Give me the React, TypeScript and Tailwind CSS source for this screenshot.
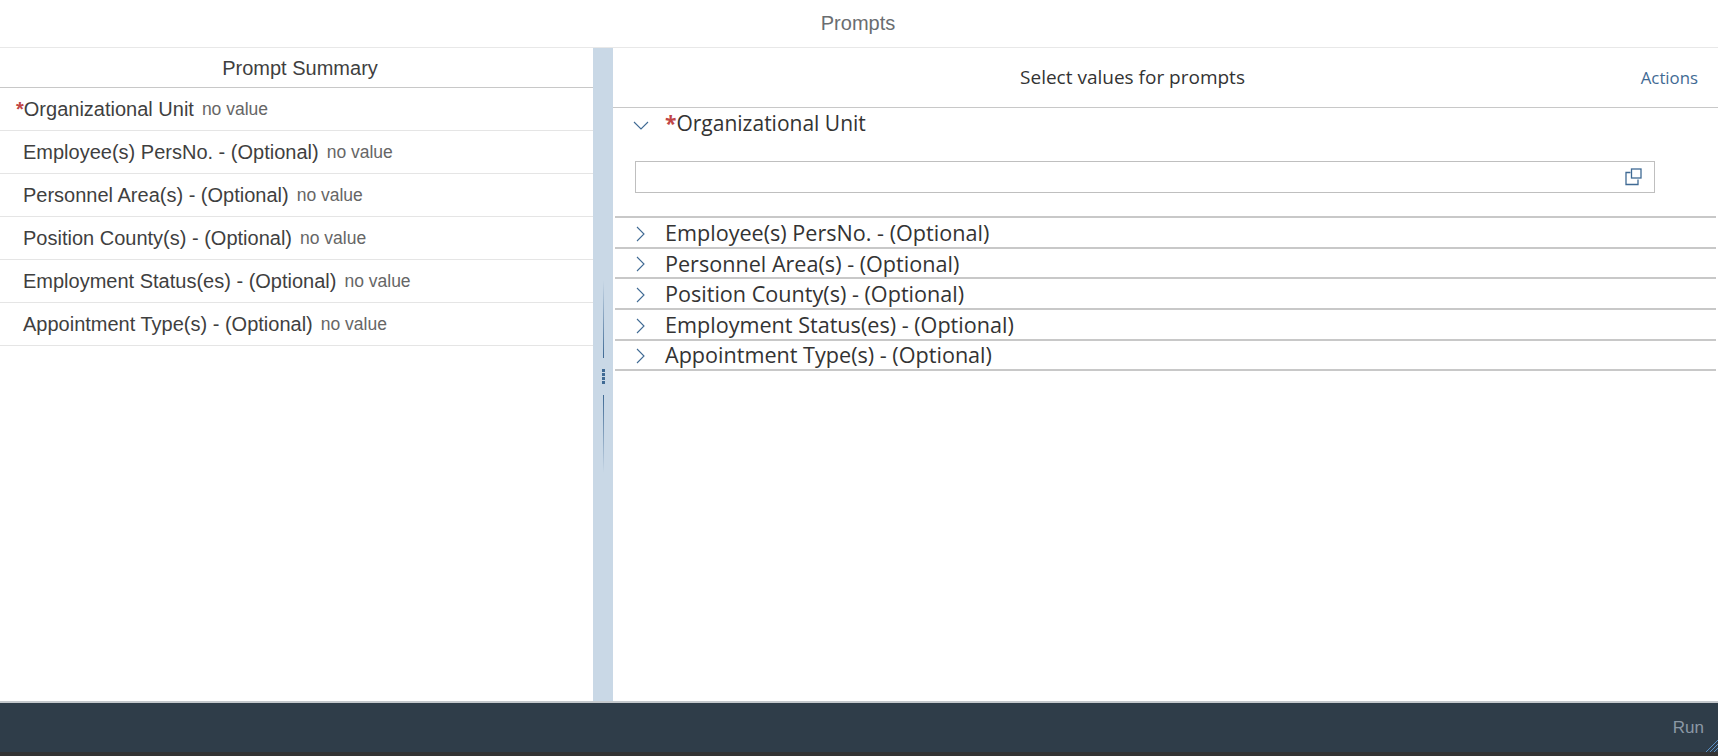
const items = [
  "Employee(s) PersNo. - (Optional)",
  "Personnel Area(s) - (Optional)",
  "Position County(s) - (Optional)",
  "Employment Status(es) - (Optional)",
  "Appointment Type(s) - (Optional)",
];
const rightHeights = ["h-[31px]", "h-[30px]", "h-[31px]", "h-[31px]", "h-[30px]"];

function Chevron({ down }: { down?: boolean }) {
  return (
    <svg width="16" height="16" viewBox="0 0 16 16" fill="none" stroke="#3f6a94" strokeWidth="1.1" className={`shrink-0 ${down ? "mt-[3px]" : "mt-[2px]"}`}>
      {down ? <path d="M1 5l7 7 7-7" /> : <path d="M4 1l7 7-7 7" />}
    </svg>
  );
}

function Row({ label, req }: { label: string; req?: boolean }) {
  return (
    <div className={`h-[43px] border-b border-[#e5e5e5] flex items-center ${req ? "pl-[16px]" : "pl-[23px]"}`}>
      {req && <span className="text-[#c14646] text-[20px] font-bold">*</span>}
      <span className="text-[20px] text-[#3f3f3f]">{label}</span>
      <span className="text-[17.5px] text-[#666666] ml-[8px] pt-[1px]">no value</span>
    </div>
  );
}

export default function App() {
  return (
    <div className="w-[1718px] h-[756px] flex flex-col bg-white overflow-hidden font-['Liberation_Sans',sans-serif]">
      <div className="h-[48px] shrink-0 border-b border-[#e8e8e8] flex items-center justify-center text-[20px] text-[#6a6d70] pr-[2px] pb-[1px]">
        Prompts
      </div>
      <div className="flex-1 flex min-h-0">
        <div className="w-[593px] shrink-0">
          <div className="h-[40px] border-b border-[#c8c8c8] flex items-center justify-center text-[20px] text-[#3f3f3f] pl-[7px]">
            Prompt Summary
          </div>
          <Row label="Organizational Unit" req />
          {items.map((t) => (
            <Row key={t} label={t} />
          ))}
        </div>
        <div className="w-[20px] shrink-0 bg-[#c9d8e6] flex flex-col items-center justify-center pt-[4px]">
          <div className="w-px h-[78px] bg-gradient-to-b from-[#c9d8e6] to-[#3f6a94]" />
          <div className="flex flex-col gap-[1px] my-[11px]">
            {[0, 1, 2, 3].map((i) => (
              <div key={i} className="w-[3px] h-[3px] bg-[#3f6a94]" />
            ))}
          </div>
          <div className="w-px h-[78px] bg-gradient-to-b from-[#3f6a94] to-[#c9d8e6]" />
        </div>
        <div className="flex-1 min-w-0 font-['Open_Sans',sans-serif]">
          <div className="h-[60px] border-b border-[#c8c8c8] relative flex items-center justify-center text-[19px] text-[#333333] pr-[66px]">
            Select values for prompts
            <span className="absolute right-[20px] text-[#3f6a94] text-[16.8px]">Actions</span>
          </div>
          <div className="pl-[2px] pr-[2px]">
            <div className="h-[110px] border-b-2 border-[#c8c8c8]">
              <div className="flex items-center h-[31px] pl-[18px] text-[21px] text-[#333333]">
                <Chevron down />
                <span className="ml-[16px] text-[#c14646] font-bold">*</span>
                <span>Organizational Unit</span>
              </div>
              <div className="mt-[22px] ml-[20px] w-[1020px] h-[32px] border border-[#bfbfbf] flex items-center justify-end pr-[11px]">
                <svg width="18" height="18" viewBox="0 0 18 18" fill="none" stroke="#3f6a94" strokeWidth="1.3">
                  <path d="M5.5 4.5H1v12h12v-5" />
                  <rect x="6.5" y="1" width="9.5" height="9" />
                </svg>
              </div>
            </div>
            {items.map((t, i) => (
              <div key={t} className={`${rightHeights[i]} border-b-2 border-[#c8c8c8] flex items-center pl-[18px] text-[21.6px] text-[#333333]`}>
                <Chevron />
                <span className={`ml-[16px] ${i === 4 ? "" : "pt-[2px]"}`}>{t}</span>
              </div>
            ))}
          </div>
        </div>
      </div>
      <div className="h-[55px] shrink-0 border-t-2 border-[#c4c8cc] bg-[#2f3d49] relative">
        <div className="h-[49px] flex items-center justify-end pr-[14px] text-[17px] text-[#8b98a5]">Run</div>
        <div className="h-[4px] bg-[#333333]" />
        <svg width="12" height="12" viewBox="0 0 12 12" className="absolute right-0 bottom-[4px]" stroke="#5a8fc4" strokeWidth="1">
          <path d="M0 12L12 0M4 12L12 4M8 12L12 8" />
        </svg>
      </div>
    </div>
  );
}
